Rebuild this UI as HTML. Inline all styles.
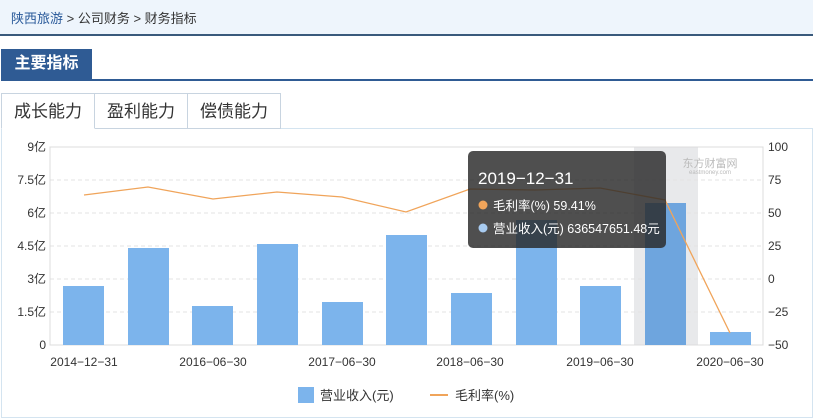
<!DOCTYPE html>
<html><head><meta charset="utf-8"><style>
body{margin:0;width:820px;height:420px;background:#fff;font-family:"Liberation Sans","Noto Sans CJK SC",sans-serif;position:relative;overflow:hidden}
.bc{position:absolute;left:0;top:0;width:813px;height:36px;background:#eef5fc;border-bottom:2px solid #3a5a7c;font-size:13px;color:#333;line-height:37px;padding-left:11px;box-sizing:border-box}
.bc a{color:#2a5a9a}
.title{position:absolute;left:1px;top:49px;width:91px;height:30px;background:#2f5b94;color:#fff;font-size:16px;font-weight:bold;line-height:30px;text-align:center}
.tline{position:absolute;left:1px;top:79px;width:812px;height:2px;background:#2f5b94}
.tab{position:absolute;top:93px;height:36px;border:1px solid #c8d4e0;font-size:17px;line-height:36px;text-align:center;color:#333;box-sizing:border-box}
.box{position:absolute;left:1px;top:128px;width:812px;height:290px;border:1px solid #d4e4f0;box-sizing:border-box}
</style></head><body>
<div class="bc"><a>陕西旅游</a> &gt; 公司财务 &gt; 财务指标</div>
<div class="title">主要指标</div><div class="tline"></div>
<div class="box"></div>
<div class="tab" style="left:1px;width:94px;border-bottom:1px solid #fff;z-index:2;background:#fff">成长能力</div>
<div class="tab" style="left:94px;width:94px">盈利能力</div>
<div class="tab" style="left:187px;width:94px">偿债能力</div>
<svg style="position:absolute;left:0;top:0" width="820" height="420" font-family="Liberation Sans, Noto Sans CJK SC, sans-serif">
<rect x="634" y="147" width="64" height="198" fill="#e8e9eb"/>
<g stroke="#e3e3e3" stroke-dasharray="4,3"><line x1="50" x2="763" y1="180" y2="180"/><line x1="50" x2="763" y1="213" y2="213"/><line x1="50" x2="763" y1="246" y2="246"/><line x1="50" x2="763" y1="279" y2="279"/><line x1="50" x2="763" y1="312" y2="312"/></g>
<rect x="50" y="147" width="713" height="198" fill="none" stroke="#dcdcdc"/>
<g fill="#7cb4ec">
<rect x="63" y="286" width="41" height="59"/><rect x="128" y="248" width="41" height="97"/><rect x="192" y="306" width="41" height="39"/><rect x="257" y="244" width="41" height="101"/><rect x="322" y="302" width="41" height="43"/><rect x="386" y="235" width="41" height="110"/><rect x="451" y="293" width="41" height="52"/><rect x="516" y="220" width="41" height="125"/><rect x="580" y="286" width="41" height="59"/><rect x="645" y="203" width="41" height="142" fill="#6ea5de"/><rect x="710" y="332" width="41" height="13"/>
</g>
<polyline fill="none" stroke="#f0a45a" stroke-width="1.3" points="84,195 148,187 213,199 277,192 342,197 406,212 470,189 535,190 600,188 665,200 730,333"/>
<g font-size="12" fill="#333" text-anchor="end"><text x="46" y="151">9亿</text><text x="46" y="184">7.5亿</text><text x="46" y="217">6亿</text><text x="46" y="250">4.5亿</text><text x="46" y="283">3亿</text><text x="46" y="316">1.5亿</text><text x="46" y="349">0</text></g>
<g font-size="12" fill="#333"><text x="768" y="151">100</text><text x="768" y="184">75</text><text x="768" y="217">50</text><text x="768" y="250">25</text><text x="768" y="283">0</text><text x="768" y="316">−25</text><text x="768" y="349">−50</text></g>
<g font-size="12" fill="#333" text-anchor="middle"><text x="84" y="366">2014−12−31</text><text x="213" y="366">2016−06−30</text><text x="342" y="366">2017−06−30</text><text x="470" y="366">2018−06−30</text><text x="600" y="366">2019−06−30</text><text x="730" y="366">2020−06−30</text></g>
<text x="710" y="167" font-size="11" fill="#bbb" text-anchor="middle">东方财富网</text>
<text x="710" y="174" font-size="6" fill="#bbb" text-anchor="middle">eastmoney.com</text>
<rect x="468" y="151" width="198" height="97" rx="5" fill="rgba(40,40,40,0.82)"/>
<text x="478" y="184" font-size="17" fill="#fff">2019−12−31</text>
<circle cx="483" cy="205" r="4.5" fill="#f0a45a"/><text x="493" y="210" font-size="12.5" fill="#fff">毛利率(%) 59.41%</text>
<circle cx="483" cy="228" r="4.5" fill="#a8cbf0"/><text x="493" y="233" font-size="12.5" fill="#fff">营业收入(元) 636547651.48元</text>
<rect x="298" y="387" width="16" height="16" fill="#7cb4ec"/><text x="320" y="400" font-size="13" fill="#333">营业收入(元)</text>
<line x1="430" x2="448" y1="395" y2="395" stroke="#f0a45a" stroke-width="2"/><text x="455" y="400" font-size="13" fill="#333">毛利率(%)</text>
</svg>
</body></html>
